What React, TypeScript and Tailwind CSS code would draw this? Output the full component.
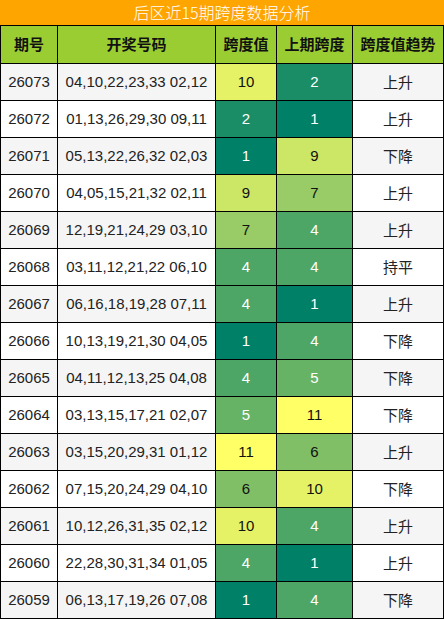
import React from 'react';

type Row = {
  issue: string;
  nums: string;
  span: number;
  prev: number;
  trend: string;
};

const rows: Row[] = [
  { issue: '26073', nums: '04,10,22,23,33 02,12', span: 10, prev: 2, trend: '上升' },
  { issue: '26072', nums: '01,13,26,29,30 09,11', span: 2, prev: 1, trend: '上升' },
  { issue: '26071', nums: '05,13,22,26,32 02,03', span: 1, prev: 9, trend: '下降' },
  { issue: '26070', nums: '04,05,15,21,32 02,11', span: 9, prev: 7, trend: '上升' },
  { issue: '26069', nums: '12,19,21,24,29 03,10', span: 7, prev: 4, trend: '上升' },
  { issue: '26068', nums: '03,11,12,21,22 06,10', span: 4, prev: 4, trend: '持平' },
  { issue: '26067', nums: '06,16,18,19,28 07,11', span: 4, prev: 1, trend: '上升' },
  { issue: '26066', nums: '10,13,19,21,30 04,05', span: 1, prev: 4, trend: '下降' },
  { issue: '26065', nums: '04,11,12,13,25 04,08', span: 4, prev: 5, trend: '下降' },
  { issue: '26064', nums: '03,13,15,17,21 02,07', span: 5, prev: 11, trend: '下降' },
  { issue: '26063', nums: '03,15,20,29,31 01,12', span: 11, prev: 6, trend: '上升' },
  { issue: '26062', nums: '07,15,20,24,29 04,10', span: 6, prev: 10, trend: '下降' },
  { issue: '26061', nums: '10,12,26,31,35 02,12', span: 10, prev: 4, trend: '上升' },
  { issue: '26060', nums: '22,28,30,31,34 01,05', span: 4, prev: 1, trend: '上升' },
  { issue: '26059', nums: '06,13,17,19,26 07,08', span: 1, prev: 4, trend: '下降' },
];

// summer-style scale, 1 = dark teal, 11 = yellow
const spanColor = (v: number) => {
  switch (v) {
    case 1: return 'bg-[#008066] text-white';
    case 2: return 'bg-[#1a8c66] text-white';
    case 3: return 'bg-[#339966] text-white';
    case 4: return 'bg-[#4da666] text-white';
    case 5: return 'bg-[#66b366] text-white';
    case 6: return 'bg-[#80bf66] text-[#111]';
    case 7: return 'bg-[#99cc66] text-[#111]';
    case 8: return 'bg-[#b3d966] text-[#111]';
    case 9: return 'bg-[#cce666] text-[#111]';
    case 10: return 'bg-[#e6f266] text-[#111]';
    default: return 'bg-[#ffff66] text-[#111]';
  }
};

const headers = ['期号', '开奖号码', '跨度值', '上期跨度', '跨度值趋势'];

const num = "font-['Liberation_Sans','Noto_Sans_CJK_SC',sans-serif]";
const cjk = "font-['Noto_Sans_CJK_SC',sans-serif]";

export default function App() {
  return (
    <div className="w-[444px] bg-black">
      <div className={`h-[25px] bg-[#ffa500] text-white text-[16px] font-light leading-[25px] text-center ${cjk}`}>
        后区近15期跨度数据分析
      </div>
      <div className="grid grid-cols-[56px_157px_60px_75px_90px] gap-px p-px">
        {headers.map((h) => (
          <div
            key={h}
            className={`h-[37px] bg-[#9acd32] flex items-center justify-center text-[15px] font-bold text-[#111] ${cjk}`}
          >
            {h}
          </div>
        ))}
        {rows.map((r, i) => {
          const base = i % 2 === 0 ? 'bg-[#f5f5f5]' : 'bg-white';
          return (
            <React.Fragment key={r.issue}>
              <div className={`h-[36px] ${base} flex items-center justify-center text-[15px] text-[#222] ${num}`}>
                {r.issue}
              </div>
              <div className={`h-[36px] ${base} flex items-center justify-center text-[15px] text-[#222] ${num}`}>
                {r.nums}
              </div>
              <div className={`h-[36px] ${spanColor(r.span)} flex items-center justify-center text-[15px] ${num}`}>
                {r.span}
              </div>
              <div className={`h-[36px] ${spanColor(r.prev)} flex items-center justify-center text-[15px] ${num}`}>
                {r.prev}
              </div>
              <div className={`h-[36px] ${base} flex items-center justify-center text-[15px] text-[#222] ${cjk}`}>
                {r.trend}
              </div>
            </React.Fragment>
          );
        })}
      </div>
    </div>
  );
}
